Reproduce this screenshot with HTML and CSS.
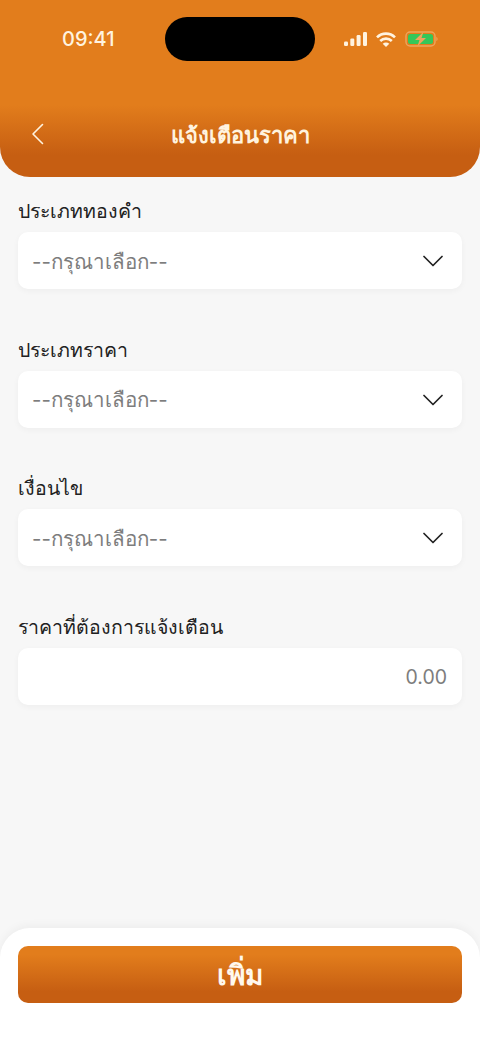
FILE: index.html
```html
<!DOCTYPE html>
<html lang="th">
<head>
    <meta charset="UTF-8">
    <meta name="viewport" content="width=device-width, initial-scale=1.0">
    <title>แจ้งเตือนราคา</title>
    <link rel="stylesheet" href="styles.css">
</head>
<body>
    <div class="page">
        <header class="app-header">
            <div class="status-bar">
                <span class="status-time">09:41</span>
                <div class="status-icons">
                    <svg width="23" height="14" viewBox="0 0 23 14" fill="#fff3df">
                        <rect x="0" y="9.500" width="4" height="4.500" rx="1.200"/>
                        <rect x="6.300" y="6.500" width="4" height="7.500" rx="1.200"/>
                        <rect x="12.600" y="3" width="4" height="11" rx="1.200"/>
                        <rect x="19" y="0" width="4" height="14" rx="1.200"/>
                    </svg>
                    <svg width="20" height="15" viewBox="0 0 20 15" fill="none" stroke="#fff3df" stroke-width="2.600">
                        <path d="M1 5.400C6 .4 14 .4 19 5.400"/>
                        <path d="M4.200 9C7.500 5.800 12.500 5.800 15.800 9"/>
                        <path d="M10 15 6.700 11.700C8.500 10.200 11.500 10.200 13.300 11.700Z" fill="#fff3df" stroke="none"/>
                    </svg>
                    <svg width="33" height="16" viewBox="0 0 33 16">
                        <rect x="1" y="1" width="29" height="14" rx="4" fill="none" stroke="#eda55c" stroke-width="1.400"/>
                        <rect x="3" y="3" width="25" height="10" rx="2.500" fill="#34c759"/>
                        <path d="M31.300 6v4c.9-.3 1.300-1.100 1.300-2s-.4-1.700-1.300-2Z" fill="#eda55c"/>
                        <path d="M18.500 .8 10 9h4.500L12.500 15.200 21 7h-4.500Z" fill="#eda55c"/>
                    </svg>
                </div>
            </div>
            <div class="island"></div>
            <div class="nav-bar">
                <svg class="back-icon" width="14" height="22" viewBox="0 0 14 22" fill="none" stroke="#fff3df" stroke-width="1.600" stroke-linecap="round" stroke-linejoin="round">
                    <path d="M11.500 1.500 2 11l9.500 9.500"/>
                </svg>
                <h1 class="nav-title">แจ้งเตือนราคา</h1>
            </div>
        </header>

        <main class="form">
            <div class="form-group">
                <label class="form-label">ประเภททองคำ</label>
                <div class="field">
                    <span class="placeholder">--กรุณาเลือก--</span>
                    <svg class="chevron" width="20" height="12" viewBox="0 0 20 12" fill="none" stroke="#222" stroke-width="1.700" stroke-linecap="round" stroke-linejoin="round"><path d="M1 1.500 10 10.500 19 1.500"/></svg>
                </div>
            </div>
            <div class="form-group">
                <label class="form-label">ประเภทราคา</label>
                <div class="field">
                    <span class="placeholder">--กรุณาเลือก--</span>
                    <svg class="chevron" width="20" height="12" viewBox="0 0 20 12" fill="none" stroke="#222" stroke-width="1.700" stroke-linecap="round" stroke-linejoin="round"><path d="M1 1.500 10 10.500 19 1.500"/></svg>
                </div>
            </div>
            <div class="form-group">
                <label class="form-label">เงื่อนไข</label>
                <div class="field">
                    <span class="placeholder">--กรุณาเลือก--</span>
                    <svg class="chevron" width="20" height="12" viewBox="0 0 20 12" fill="none" stroke="#222" stroke-width="1.700" stroke-linecap="round" stroke-linejoin="round"><path d="M1 1.500 10 10.500 19 1.500"/></svg>
                </div>
            </div>
            <div class="form-group">
                <label class="form-label">ราคาที่ต้องการแจ้งเตือน</label>
                <div class="field field-number">
                    <span class="placeholder">0.00</span>
                </div>
            </div>
        </main>

        <footer class="app-footer">
            <button type="button" class="add-btn">เพิ่ม</button>
        </footer>
    </div>
</body>
</html>
```

FILE: styles.css
```css
:root {
    --orange-top: #e27d1c;
    --orange-bottom: #c65e12;
    --page-bg: #f7f7f7;
    --text-color: #222222;
    --placeholder: #7d7d7d;
}

body {
    margin: 0;
    font-family: 'Inter', 'Noto Sans', 'DejaVu Sans', sans-serif;
    background-color: var(--page-bg);
    color: var(--text-color);
}

.page {
    position: relative;
    display: flex;
    flex-direction: column;
    height: 1044px;
    overflow: hidden;
}

.app-header {
    position: relative;
    height: 177px;
    flex-shrink: 0;
    background: linear-gradient(180deg, var(--orange-top) 0, var(--orange-top) 105px, var(--orange-bottom) 155px);
    border-radius: 0 0 30px 30px;
    color: #fff3df;
}

.status-bar {
    display: flex;
    justify-content: space-between;
    align-items: center;
    height: 24px;
    padding: 27px 42px 0 62px;
}

.status-time {
    font-size: 20px;
    font-weight: 500;
}

.status-icons {
    display: flex;
    align-items: center;
    gap: 9px;
}

.island {
    position: absolute;
    left: 165px;
    top: 17px;
    width: 150px;
    height: 44px;
    border-radius: 22px;
    background-color: #000000;
}

.nav-bar {
    position: relative;
    display: flex;
    justify-content: center;
    align-items: center;
    margin-top: 56px;
    height: 56px;
}

.back-icon {
    position: absolute;
    left: 31px;
    top: 16px;
}

.nav-title {
    margin: 0;
    font-size: 22px;
    font-weight: 600;
}

.form {
    flex: 1;
    padding: 19px 18px 0;
}

.form-group {
    margin-bottom: 45.700px;
}

.form-label {
    display: block;
    height: 36px;
    line-height: 30px;
    font-size: 19.500px;
    font-weight: 400;
}

.field {
    display: flex;
    justify-content: space-between;
    align-items: center;
    box-sizing: border-box;
    height: 57px;
    padding: 1px 19px 0 14px;
    background-color: #ffffff;
    border-radius: 10px;
    box-shadow: 0 2px 6px rgba(0, 0, 0, 0.04);
}

.field-number {
    justify-content: flex-end;
    padding-right: 15px;
}

.placeholder {
    font-size: 20.500px;
    color: var(--placeholder);
}

.field-number .placeholder {
    font-size: 19.500px;
}

.app-footer {
    flex-shrink: 0;
    box-sizing: border-box;
    height: 116px;
    padding: 18px 18px 0;
    background-color: #ffffff;
    border-radius: 30px 30px 0 0;
    box-shadow: 0 -3px 8px rgba(0, 0, 0, 0.04);
}

.add-btn {
    display: block;
    width: 100%;
    height: 57px;
    padding: 0;
    border: none;
    border-radius: 10px;
    background: linear-gradient(180deg, var(--orange-top) 15%, var(--orange-bottom) 80%);
    color: #fff8ee;
    font-family: inherit;
    font-size: 28px;
    font-weight: 600;
}
```
